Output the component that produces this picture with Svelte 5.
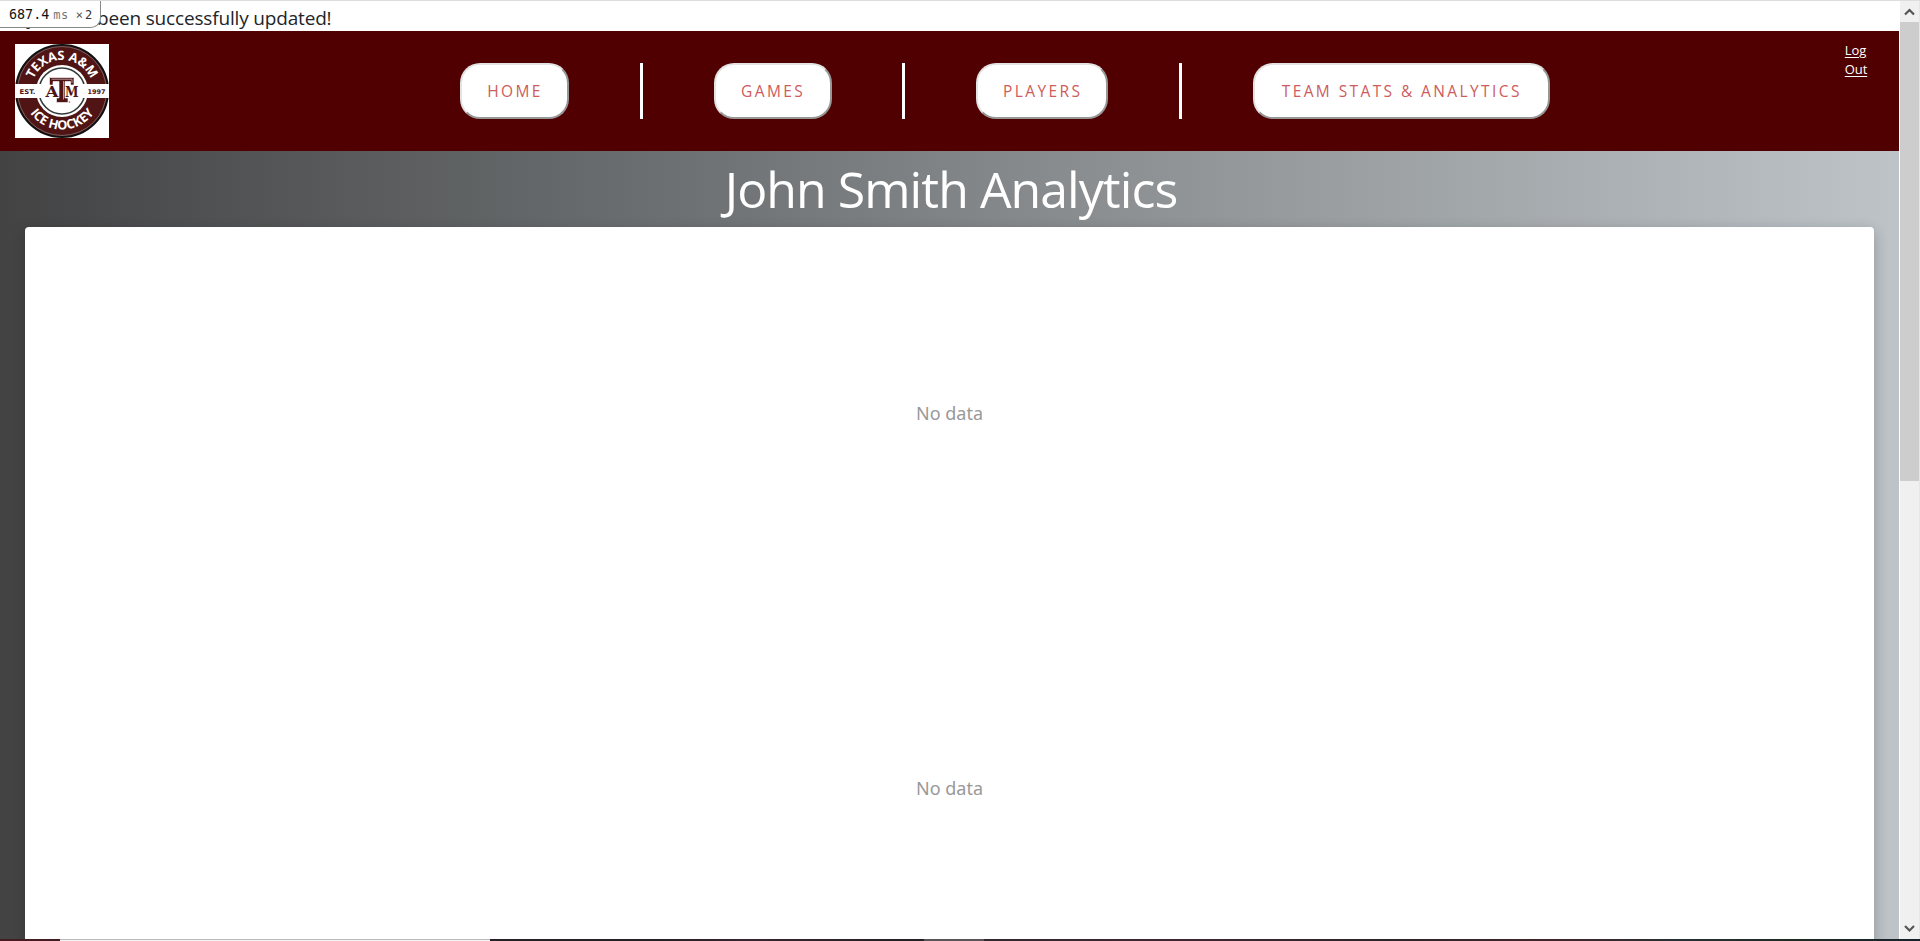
<script>
  const links = ['Home', 'Games', 'Players', 'Team stats & analytics'];
  const widths = [109, 118, 132, 297];
  const charts = ['No data', 'No data'];
</script>

<div class="screen">
  <div class="page">
    <div class="notice"><span>Player has</span>been successfully updated!</div>
    <div class="profiler"><b>687.4</b><i>ms</i><em>×</em><u>2</u></div>
    <header>
      <svg class="logo" width="94" height="94" viewBox="0 0 94 94">
        <defs>
          <path id="upper" d="M16 47A31 31 0 0 1 78 47" />
          <path id="lower" d="M7.5 46A39.5 39.5 0 0 0 86.5 46" />
        </defs>
        <rect width="94" height="94" fill="#fff" />
        <circle cx="47" cy="47" r="46" fill="#501414" stroke="#111" stroke-width="2" />
        <circle cx="47" cy="47" r="44.5" fill="none" stroke="#8e8080" stroke-width=".7" />
        <circle cx="47" cy="47" r="26" fill="#fff" />
        <circle cx="47" cy="47" r="23" fill="#fff" stroke="#343a3a" stroke-width="1.6" />
        <rect y="40" width="94" height="14" fill="#fff" />
        <text class="ring" font-size="12.8"><textPath href="#upper" startOffset="50%" text-anchor="middle">TEXAS A&amp;M</textPath></text>
        <text class="ring" font-size="12.8"><textPath href="#lower" startOffset="50%" text-anchor="middle">ICE HOCKEY</textPath></text>
        <text x="4.5" y="49.5" class="small" textLength="16" lengthAdjust="spacingAndGlyphs">EST.</text>
        <text x="72.5" y="49.5" class="small" textLength="18" lengthAdjust="spacingAndGlyphs">1997</text>
        <text x="30.5" y="52.5" class="slab" font-size="14.5" textLength="13" lengthAdjust="spacingAndGlyphs">A</text>
        <text x="50" y="52.5" class="slab" font-size="14.5" textLength="13.5" lengthAdjust="spacingAndGlyphs">M</text>
        <path d="M34.5 33.5H59V41H55.5V37.5H50V54H53V58.5H41.5V54H44V37.5H38V41H34.5Z" fill="#501414" stroke="#fff" stroke-width=".6" />
        <path d="M36.5 35.2H57M48.5 37V55.5M57 35.2V39" fill="none" stroke="#c8b9b9" stroke-width=".8" />
        <circle cx="54.5" cy="58" r=".8" fill="#8c6868" />
      </svg>
      <nav>
        {#each links as link, i}
          {#if i > 0}<div class="divider"></div>{/if}
          <button style:width="{widths[i]}px">{link}</button>
        {/each}
      </nav>
      <a class="logout" href="#logout">Log<br />Out</a>
    </header>
    <main>
      <h1>John Smith Analytics</h1>
      <section class="card">
        {#each charts as message}
          <div class="chart">{message}</div>
        {/each}
      </section>
    </main>
  </div>
  <aside class="scrollbar">
    <svg width="19" height="21" viewBox="0 0 19 21"><path d="M5 13.5L9.5 9L14 13.5" /></svg>
    <div class="thumb"></div>
    <div class="track"></div>
    <svg width="19" height="21" viewBox="0 0 19 21"><path d="M5 8L9.5 12.5L14 8" /></svg>
  </aside>
  <footer><div class="maroon"></div><div class="search"></div><div class="tasks"></div></footer>
</div>

<style>
  :global(body) { margin: 0; overflow: hidden; background: #fff; }
  .screen {
    box-sizing: border-box; width: 1920px; height: 941px; overflow: hidden;
    display: grid; grid-template: 938px 2px / 1899px 21px;
    border-top: 1px solid #ddd; font-family: "Open Sans", sans-serif;
  }
  .page { position: relative; display: flex; flex-direction: column; overflow: hidden; }
  .notice {
    height: 30px; flex: none; box-sizing: border-box;
    font-size: 19px; line-height: 34px; letter-spacing: -.17px; color: #212529; white-space: pre;
  }
  .notice span { display: inline-block; width: 97px; }
  .profiler {
    position: absolute; left: 0; top: 0; width: 101px; height: 27px; box-sizing: border-box;
    border: solid #888; border-width: 0 1px 1px 0; border-radius: 0 0 10px 0; background: #fff;
    padding-left: 9px; display: flex; align-items: baseline; line-height: 27px;
    font-family: "DejaVu Sans Mono", monospace; color: #111;
  }
  .profiler b { font-weight: 400; font-size: 13.4px; }
  .profiler i { font-style: normal; font-size: 12px; color: #777; margin-left: 4px; letter-spacing: .5px; }
  .profiler em { font-style: normal; font-size: 12px; color: #555; margin-left: 7px; }
  .profiler u { text-decoration: none; font-size: 12px; color: #333; margin-left: 2px; }
  header { height: 120px; flex: none; background: #500000; display: flex; align-items: flex-start; }
  .logo { margin: 13px 0 0 15px; }
  .ring { fill: #fff; font-family: "Open Sans", sans-serif; font-weight: 700; }
  .small { fill: #501414; font: 700 6.5px "DejaVu Sans", sans-serif; }
  .slab { fill: #501414; font-family: "DejaVu Serif", serif; font-weight: 700; }
  nav { display: flex; gap: 70.8px; margin: 32px 0 0 351px; }
  .divider { width: 3px; height: 56px; background: #fff; }
  button {
    box-sizing: border-box; height: 56px; padding: 0 0 0 1px; background: #fff; border-radius: 20px;
    border: 2px solid; border-color: #e3e3e3 #979797 #979797 #e3e3e3;
    color: #cd5c5c; font: 400 15.5px "Open Sans", sans-serif; letter-spacing: 2.4px;
    text-transform: uppercase; white-space: nowrap;
  }
  .logout { margin: 10px 0 0 295px; font-size: 13px; line-height: 19px; color: #fff; text-underline-offset: 2px; letter-spacing: -.1px; }
  main { flex: 1; padding: 0 25px; background: linear-gradient(to right, #434344, #6e7274 37%, #8b8f91 58%, #bdc3c7); }
  h1 {
    margin: 0; height: 76px; padding-left: 3px; text-align: center; color: #fff; font-size: 50px;
    line-height: 77px; font-weight: 400; letter-spacing: -.95px;
  }
  .card { height: 1200px; background: #fff; border-radius: 4px; box-shadow: 0 4px 14px rgba(0, 0, 0, .23); }
  .chart {
    height: 375px; display: flex; align-items: center; justify-content: center; padding-bottom: 4px; box-sizing: border-box;
    font: 18px "Noto Sans", sans-serif; color: #999;
  }
  .scrollbar { background: #f0f0f0; border-left: 1px solid #fff; border-right: 1px solid #e6e6e6; box-sizing: border-box; display: flex; flex-direction: column; }
  .scrollbar path { fill: none; stroke: #555; stroke-width: 2.2; }
  .scrollbar svg { flex: none; }
  .thumb { height: 459px; background: #cdcdcd; }
  .track { flex: 1; }
  footer { grid-column: 1 / 3; display: flex; height: 2px; }
  .maroon { width: 60px; background: #451c22; }
  .search { width: 430px; height: 1px; background: #f2f2f2; border-top: 1px solid #bbb; }
  .tasks { flex: 1; background: linear-gradient(to right, #252026 0 170px, #382430 260px, #252026 400px 434px, #5b5559 434px 494px, #30272f 494px, #402633 680px, #2b2529 900px, #432629 1060px, #263034 1190px, #202b25 1300px, #17212b); }
</style>
